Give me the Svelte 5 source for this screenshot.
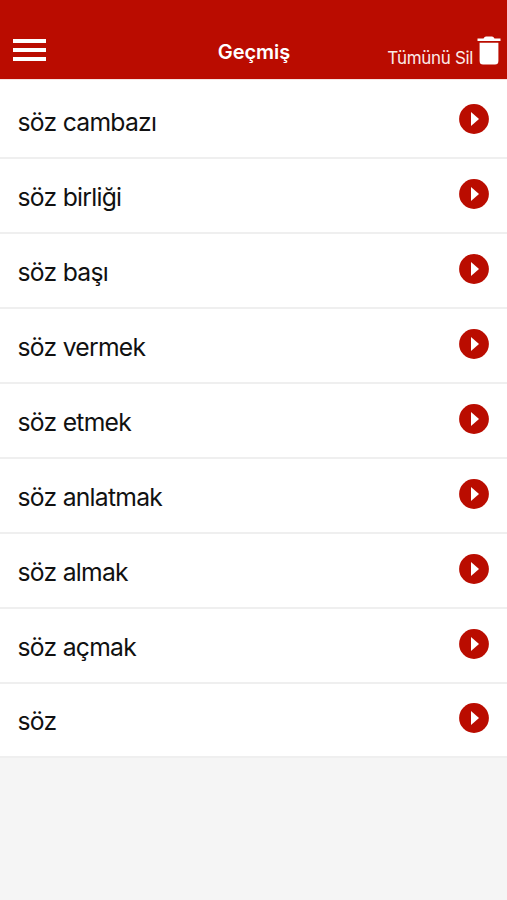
<script lang="ts">
type Entry = {
  id: number
  word: string
}

const words = [
  "söz cambazı",
  "söz birliği",
  "söz başı",
  "söz vermek",
  "söz etmek",
  "söz anlatmak",
  "söz almak",
  "söz açmak",
  "söz",
]

let history: Entry[] = $state(words.map((word, id) => ({ id, word })))

function clearHistory() {
  history = []
}
</script>

<main class="app" lang="tr">
  <header class="bar">
    <button class="menu" aria-label="Menü">
      <span></span>
      <span></span>
      <span></span>
    </button>
    <h1>Geçmiş</h1>
    <button class="clear" onclick={clearHistory}>
      <span class="label">Tümünü Sil</span>
      <svg width="24" height="30" viewBox="0 0 24 30" aria-hidden="true">
        <path d="M0.5 2.4H6.5Q7.5 0.5 9 0.5H15Q16.5 0.5 17.5 2.4H23.5V5H0.5Z" />
        <path d="M2.6 6.7H21.4V25Q21.4 28.5 18 28.5H6Q2.6 28.5 2.6 25Z" />
      </svg>
    </button>
  </header>

  <ul class="list">
    {#each history as entry (entry.id)}
      <li>
        <span class="word">{entry.word}</span>
        <svg class="go" width="30" height="30" viewBox="0 0 30 30" aria-hidden="true">
          <circle cx="15" cy="15" r="14.9" />
          <path d="M12 8L20 15L12 22Z" />
        </svg>
      </li>
    {/each}
  </ul>
</main>

<style>
  :global(body) {
    margin: 0;
    font-family: Inter, "Liberation Sans", sans-serif;
    background: #f5f5f5;
    color: #111;
  }

  .app {
    min-height: 100vh;
    background: #f5f5f5;
  }

  .bar {
    display: grid;
    grid-template-columns: 1fr auto 1fr;
    align-items: end;
    box-sizing: border-box;
    height: 79px;
    padding: 0 6px 0 7px;
    background: #ba0c00;
    color: #fff;
  }

  button {
    padding: 0;
    border: none;
    background: transparent;
    color: inherit;
    font: inherit;
    cursor: pointer;
  }

  .menu {
    display: flex;
    flex-direction: column;
    gap: 5px;
    width: 33px;
    margin: 0 0 18px 6px;
  }

  .menu span {
    height: 4px;
    background: #fff;
  }

  h1 {
    margin: 0 0 15px;
    font-size: 20px;
    font-weight: 600;
    line-height: 24px;
  }

  .clear {
    display: flex;
    justify-self: end;
    align-items: flex-end;
    gap: 4px;
    margin-bottom: 13px;
  }

  .clear svg {
    fill: #fff;
  }

  .label {
    margin-bottom: -3px;
    font-size: 17px;
    font-weight: 400;
    line-height: 22px;
    letter-spacing: -0.35px;
    color: #fbe9e7;
    white-space: nowrap;
  }

  .list {
    margin: 0;
    padding: 4px 0 0;
    border-top: 1px solid #f6e4e1;
    list-style: none;
    background: #fff;
  }

  li {
    display: flex;
    align-items: center;
    justify-content: space-between;
    box-sizing: border-box;
    height: 74.95px;
    padding: 0 18px 0 17.5px;
    border-bottom: 2px solid #efefef;
  }

  .word {
    padding-top: 3px;
    font-size: 24.7px;
    line-height: 30px;
    letter-spacing: -0.73px;
  }

  .go {
    flex: none;
    margin-bottom: 3px;
  }

  .go circle {
    fill: #ba0c00;
  }

  .go path {
    fill: #fff;
  }
</style>
